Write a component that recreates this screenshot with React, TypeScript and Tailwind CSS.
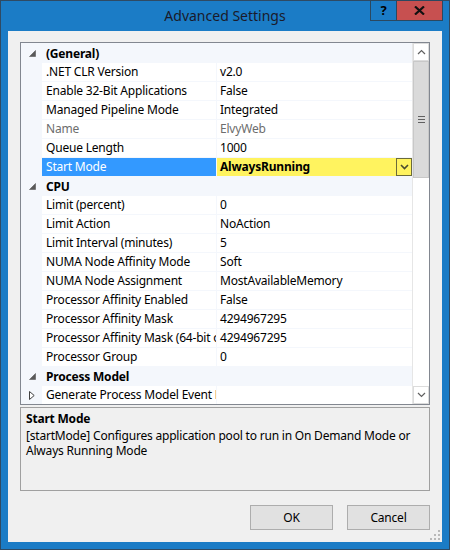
import type { ReactNode } from 'react'

type Prop = { name: string; value: string; readOnly?: boolean; selected?: boolean; expandable?: boolean }
type Category = { title: string; props: Prop[] }

const categories: Category[] = [
  {
    title: '(General)',
    props: [
      { name: '.NET CLR Version', value: 'v2.0' },
      { name: 'Enable 32-Bit Applications', value: 'False' },
      { name: 'Managed Pipeline Mode', value: 'Integrated' },
      { name: 'Name', value: 'ElvyWeb', readOnly: true },
      { name: 'Queue Length', value: '1000' },
      { name: 'Start Mode', value: 'AlwaysRunning', selected: true },
    ],
  },
  {
    title: 'CPU',
    props: [
      { name: 'Limit (percent)', value: '0' },
      { name: 'Limit Action', value: 'NoAction' },
      { name: 'Limit Interval (minutes)', value: '5' },
      { name: 'NUMA Node Affinity Mode', value: 'Soft' },
      { name: 'NUMA Node Assignment', value: 'MostAvailableMemory' },
      { name: 'Processor Affinity Enabled', value: 'False' },
      { name: 'Processor Affinity Mask', value: '4294967295' },
      { name: 'Processor Affinity Mask (64-bit option)', value: '4294967295' },
      { name: 'Processor Group', value: '0' },
    ],
  },
  {
    title: 'Process Model',
    props: [{ name: 'Generate Process Model Event Log Entry', value: '', expandable: true }],
  },
]

function Expanded() {
  return (
    <svg width="7" height="7" viewBox="0 0 7 7">
      <polygon points="6.5,0.5 6.5,6.5 0.5,6.5" fill="#595959" stroke="#595959" strokeWidth="0.6" />
    </svg>
  )
}

function Collapsed() {
  return (
    <svg width="6" height="9" viewBox="0 0 6 9">
      <polygon points="0.5,0.5 5.2,4.5 0.5,8.5" fill="white" stroke="#404040" strokeWidth="1" />
    </svg>
  )
}

function Gutter({ children }: { children?: ReactNode }) {
  return <div className="w-[21px] h-full flex items-center pl-[8px] shrink-0">{children}</div>
}

function PropRow({ p }: { p: Prop }) {
  return (
    <div className="flex h-[19px] shrink-0">
      <Gutter>{p.expandable && <Collapsed />}</Gutter>
      <div
        className={
          'w-[174px] h-[18px] flex items-center pl-[4px] overflow-hidden whitespace-nowrap shrink-0 ' +
          (p.selected ? 'bg-[#3399ff] text-white' : 'bg-white') +
          (p.readOnly ? ' text-[#6d6d6d]' : '')
        }
      >
        {p.name}
      </div>
      <div className="w-px shrink-0" />
      {p.selected ? (
        <div className="flex-1 h-[18px] bg-[#fff35f] flex items-center pl-[3px] font-bold">
          <span className="flex-1">{p.value}</span>
          <div className="w-[16px] h-[18px] border border-[#6b6a3a] flex items-center justify-center">
            <svg width="9" height="6" viewBox="0 0 9 6">
              <path d="M1 1 L4.5 4.5 L8 1" fill="none" stroke="#4a4a30" strokeWidth="1.6" />
            </svg>
          </div>
        </div>
      ) : (
        <div
          className={
            'flex-1 h-[18px] bg-white flex items-center pl-[3px] whitespace-nowrap overflow-hidden ' +
            (p.readOnly ? 'text-[#6d6d6d]' : '')
          }
        >
          {p.value}
        </div>
      )}
    </div>
  )
}

function Scrollbar() {
  return (
    <div className="w-[17px] shrink-0 flex flex-col bg-[#f0f0f0] border-l border-[#e6e6e6]">
      <div className="h-[18px] bg-white border border-[#dcdcdc] flex items-center justify-center">
        <svg width="9" height="6" viewBox="0 0 9 6">
          <path d="M1 5 L4.5 1.5 L8 5" fill="none" stroke="#606060" strokeWidth="1.2" />
        </svg>
      </div>
      <div className="h-[117px] bg-[#dadada] border border-[#c8c8c8] flex items-center justify-center">
        <div className="flex flex-col gap-[2px]">
          <div className="w-[7px] h-px bg-[#606060]" />
          <div className="w-[7px] h-px bg-[#606060]" />
          <div className="w-[7px] h-px bg-[#606060]" />
        </div>
      </div>
      <div className="flex-1 bg-white" />
      <div className="h-[18px] bg-white border border-[#dcdcdc] flex items-center justify-center">
        <svg width="9" height="6" viewBox="0 0 9 6">
          <path d="M1 1 L4.5 4.5 L8 1" fill="none" stroke="#606060" strokeWidth="1.2" />
        </svg>
      </div>
    </div>
  )
}

export default function App() {
  return (
    <div
      className="w-[450px] h-[550px] bg-[#1b7cc6] border border-[#2f4a63] flex flex-col text-[12px] tracking-[-0.2px] text-black"
      style={{ fontFamily: '"Noto Sans", "Open Sans", sans-serif' }}
    >
      <div className="relative h-[30px] shrink-0 flex items-center justify-center">
        <span className="text-[14px] tracking-normal text-[#1a1a2a] -mt-[2px]">Advanced Settings</span>
        <div className="absolute top-[-1px] right-[6px] flex tracking-normal">
          <div className="w-[27px] h-[21px] border border-[#2b4860] flex items-center justify-center font-bold text-[13px]">
            ?
          </div>
          <div className="w-[46px] h-[21px] bg-[#c75050] border border-[#2b4860] border-l-0 flex items-center justify-center">
            <svg width="11" height="9" viewBox="0 0 11 9">
              <path d="M1 0.5 L10 8.5 M10 0.5 L1 8.5" stroke="#111" strokeWidth="2.2" />
            </svg>
          </div>
        </div>
      </div>

      <div className="mx-[7px] mb-[7px] flex-1 bg-[#f0f0f0] flex flex-col px-[12px] pt-[11px] relative">
        <div className="h-[363px] border border-[#828790] bg-[#f4f7fc] flex overflow-hidden">
          <div className="flex-1 flex flex-col overflow-hidden pt-px">
            {categories.map((c) => (
              <div key={c.title} className="flex flex-col">
                <div className="flex h-[19px] shrink-0 items-center">
                  <Gutter>
                    <Expanded />
                  </Gutter>
                  <span className="pl-[4px] font-bold">{c.title}</span>
                </div>
                {c.props.map((p) => (
                  <PropRow key={p.name} p={p} />
                ))}
              </div>
            ))}
          </div>
          <Scrollbar />
        </div>

        <div className="mt-[2px] h-[84px] border border-[#a0a0a0] px-[5px] pt-[2px] leading-[15px]">
          <div className="font-bold leading-[18px]">Start Mode</div>
          <div>[startMode] Configures application pool to run in On Demand Mode or Always Running Mode</div>
        </div>

        <div className="mt-[14px] flex justify-end gap-[14px]">
          <button className="w-[83px] h-[25px] bg-[#e1e1e1] border border-[#adadad]">OK</button>
          <button className="w-[83px] h-[25px] bg-[#e1e1e1] border border-[#adadad]">Cancel</button>
        </div>

        <svg className="absolute right-[2px] bottom-[2px]" width="10" height="10" viewBox="0 0 10 10">
          <rect x="8" y="0" width="2" height="2" fill="#b8b8b8" />
          <rect x="4" y="4" width="2" height="2" fill="#b8b8b8" />
          <rect x="8" y="4" width="2" height="2" fill="#b8b8b8" />
          <rect x="0" y="8" width="2" height="2" fill="#b8b8b8" />
          <rect x="4" y="8" width="2" height="2" fill="#b8b8b8" />
          <rect x="8" y="8" width="2" height="2" fill="#b8b8b8" />
        </svg>
      </div>
    </div>
  )
}
